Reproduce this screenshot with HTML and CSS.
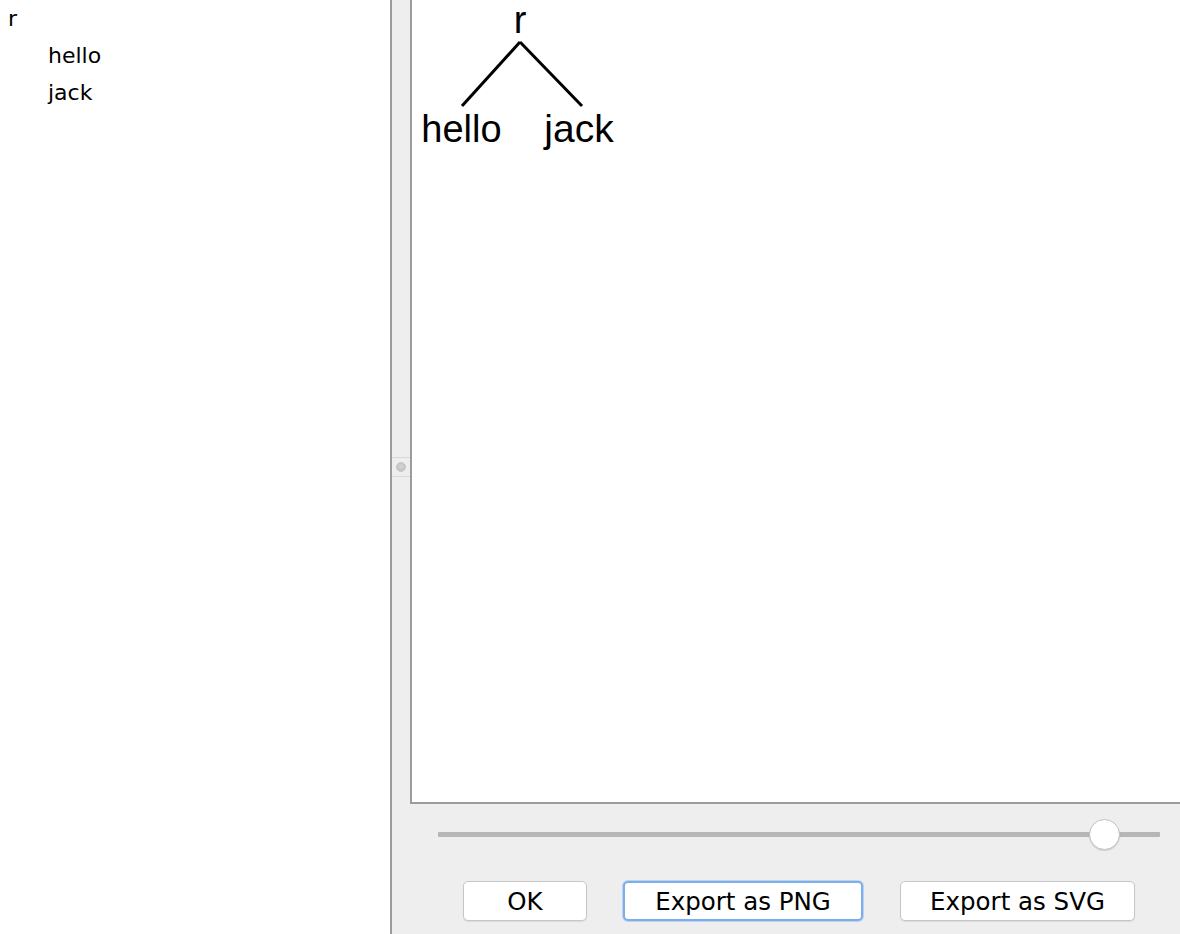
FILE: index.html
```html
<!DOCTYPE html>
<html>
<head>
<meta charset="utf-8">
<link rel="stylesheet" href="styles.css">
</head>
<body>
<div class="split">
  <div class="left">
    <div class="tree-row root">r</div>
    <div class="tree-row child">hello</div>
    <div class="tree-row child">jack</div>
  </div>
  <div class="divider">
    <div class="handle"><span class="dot"></span></div>
  </div>
  <div class="right">
    <div class="canvas">
      <svg class="diagram" width="300" height="160" viewBox="0 0 300 160">
        <line x1="108" y1="42" x2="50" y2="106" stroke="#000" stroke-width="3"/>
        <line x1="108" y1="42" x2="170" y2="106" stroke="#000" stroke-width="3"/>
        <text x="108" y="33" text-anchor="middle" class="node">r</text>
        <text x="49.5" y="142" text-anchor="middle" class="node">hello</text>
        <text x="167" y="142" text-anchor="middle" class="node jack">jack</text>
      </svg>
    </div>
    <div class="slider-row">
      <div class="slider">
        <div class="track"></div>
        <div class="knob"></div>
      </div>
    </div>
    <div class="buttons">
      <button class="btn btn-ok">OK</button>
      <button class="btn btn-png focused">Export as PNG</button>
      <button class="btn btn-svg">Export as SVG</button>
    </div>
  </div>
</div>
</body>
</html>
```

FILE: styles.css
```css
html, body {
  margin: 0;
  padding: 0;
  width: 1180px;
  height: 934px;
  overflow: hidden;
  background: #eeeeee;
}

.split {
  display: flex;
  width: 1180px;
  height: 934px;
  font-family: "DejaVu Sans", sans-serif;
  color: #000;
}

.left {
  width: 390px;
  background: #ffffff;
  padding-top: 4px;
  box-sizing: border-box;
}

.tree-row {
  font-size: 22px;
  line-height: 37px;
  height: 37px;
}

.tree-row.root {
  padding-left: 8px;
  height: 33px;
  line-height: 30px;
}

.tree-row.child {
  padding-left: 48px;
}

.divider {
  width: 18px;
  border-left: 2px solid #9c9c9c;
  background: #eeeeee;
  display: flex;
  align-items: center;
}

.handle {
  width: 18px;
  height: 18px;
  border-top: 1px solid #d9d9d9;
  border-bottom: 1px solid #d9d9d9;
  display: flex;
  align-items: center;
  justify-content: center;
}

.dot {
  width: 10px;
  height: 10px;
  border-radius: 50%;
  background: radial-gradient(circle at 50% 40%, #d4d4d4, #bdbdbd);
  border: 1px solid #c4c4c4;
  box-sizing: border-box;
}

.right {
  flex: 1;
  display: flex;
  flex-direction: column;
  background: #eeeeee;
}

.canvas {
  height: 802px;
  background: #ffffff;
  border-left: 2px solid #9c9c9c;
  border-bottom: 2px solid #9c9c9c;
  position: relative;
}

.diagram {
  display: block;
}

.node {
  font-family: "Liberation Sans", Arial, sans-serif;
  font-size: 38px;
  fill: #000;
}

.node.jack {
  font-size: 39px;
}

.slider-row {
  margin-top: 15px;
  height: 32px;
  padding-left: 28px;
  padding-right: 20px;
}

.slider {
  position: relative;
  height: 32px;
}

.track {
  position: absolute;
  left: 0;
  right: 0;
  top: 13px;
  height: 5px;
  background: #b6b6b6;
  border-radius: 1px;
}

.knob {
  position: absolute;
  left: 651px;
  top: 0;
  width: 31px;
  height: 31px;
  border-radius: 50%;
  background: #ffffff;
  border: 1px solid #c2c2c2;
  box-sizing: border-box;
  box-shadow: 0 1px 1px rgba(0,0,0,0.12);
}

.buttons {
  display: flex;
  margin-top: 30px;
  padding-left: 53px;
  gap: 36px;
}

.btn {
  height: 40px;
  font-family: "DejaVu Sans", sans-serif;
  font-size: 24.5px;
  color: #000;
  background: #ffffff;
  border: 1px solid #c6c6c6;
  border-radius: 5px;
  padding: 0;
  box-shadow: 0 1px 1px rgba(0,0,0,0.08);
}

.btn-ok { width: 124px; }
.btn-png { width: 240px; }
.btn-svg { width: 235px; margin-left: 1px; }

.btn.focused {
  border: 2px solid #7eaee8;
  box-shadow: 0 0 0 1px #b9d3f3;
}
```
